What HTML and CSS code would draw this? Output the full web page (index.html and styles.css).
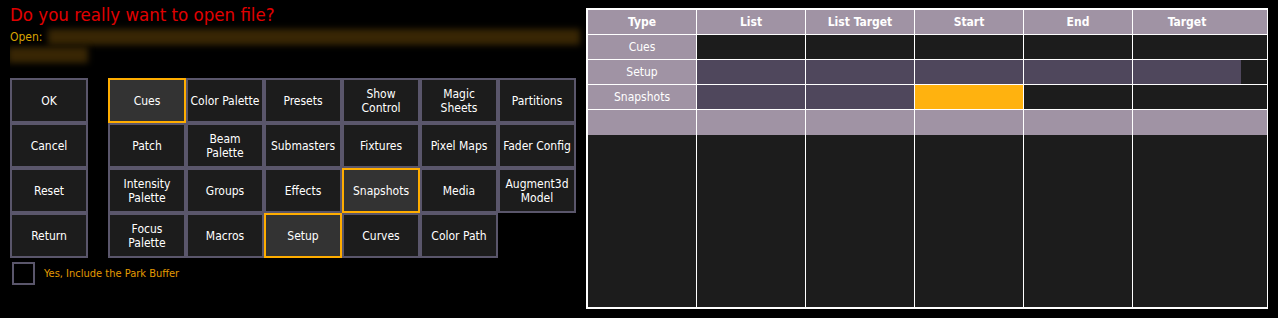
FILE: index.html
```html
<!DOCTYPE html>
<html>
<head>
<meta charset="utf-8">
<link rel="stylesheet" href="styles.css">
</head>
<body>
<div class="page">
  <div class="left">
    <div class="head">
      <div class="title">Do you really want to open file?</div>
      <div class="open-row">
        <span class="open-label">Open:</span>
        <div class="blur blur-long"></div>
      </div>
      <div class="blur blur-short"></div>
    </div>
    <div class="buttons">
      <div class="col-actions">
        <div class="btn">OK</div>
        <div class="btn">Cancel</div>
        <div class="btn">Reset</div>
        <div class="btn">Return</div>
      </div>
      <div class="grid-types">
        <div class="btn sel">Cues</div>
        <div class="btn">Color Palette</div>
        <div class="btn">Presets</div>
        <div class="btn">Show<br>Control</div>
        <div class="btn">Magic<br>Sheets</div>
        <div class="btn">Partitions</div>
        <div class="btn">Patch</div>
        <div class="btn">Beam<br>Palette</div>
        <div class="btn">Submasters</div>
        <div class="btn">Fixtures</div>
        <div class="btn">Pixel Maps</div>
        <div class="btn">Fader Config</div>
        <div class="btn">Intensity<br>Palette</div>
        <div class="btn">Groups</div>
        <div class="btn">Effects</div>
        <div class="btn sel">Snapshots</div>
        <div class="btn">Media</div>
        <div class="btn">Augment3d<br>Model</div>
        <div class="btn">Focus<br>Palette</div>
        <div class="btn">Macros</div>
        <div class="btn sel">Setup</div>
        <div class="btn">Curves</div>
        <div class="btn">Color Path</div>
      </div>
    </div>
    <div class="check-row">
      <div class="checkbox"></div>
      <span class="check-label">Yes, Include the Park Buffer</span>
    </div>
  </div>
  <div class="table">
    <div class="th">Type</div>
    <div class="th">List</div>
    <div class="th">List Target</div>
    <div class="th">Start</div>
    <div class="th">End</div>
    <div class="th th-last">Target</div>

    <div class="td type">Cues</div>
    <div class="td"></div>
    <div class="td"></div>
    <div class="td"></div>
    <div class="td"></div>
    <div class="td"></div>

    <div class="td type">Setup</div>
    <div class="td fill"></div>
    <div class="td fill"></div>
    <div class="td fill"></div>
    <div class="td fill"></div>
    <div class="td fill-part"></div>

    <div class="td type">Snapshots</div>
    <div class="td fill"></div>
    <div class="td fill"></div>
    <div class="td on"></div>
    <div class="td"></div>
    <div class="td"></div>

    <div class="td blank"></div>
    <div class="td blank"></div>
    <div class="td blank"></div>
    <div class="td blank"></div>
    <div class="td blank"></div>
    <div class="td blank"></div>

    <div class="rest"></div>
    <div class="rest"></div>
    <div class="rest"></div>
    <div class="rest"></div>
    <div class="rest"></div>
    <div class="rest"></div>
  </div>
</div>
</body>
</html>
```

FILE: styles.css
```css
html, body {
  margin: 0;
  padding: 0;
  background: #000;
}
body {
  width: 1278px;
  height: 318px;
  overflow: hidden;
  font-family: "DejaVu Sans Condensed", "DejaVu Sans", sans-serif;
  font-stretch: condensed;
  color: #fff;
}
.page {
  display: flex;
  align-items: flex-start;
}
.left {
  width: 576px;
  padding-left: 10px;
}
.head {
  height: 78px;
  overflow: hidden;
}
.title {
  padding-top: 4px;
  font-size: 18.5px;
  line-height: 22px;
  color: #e00000;
}
.open-row {
  display: flex;
  align-items: center;
  margin-top: 2px;
  height: 18px;
}
.open-label {
  font-size: 12px;
  line-height: 16px;
  color: #d8a300;
}
.blur {
  background: rgba(62, 42, 4, 0.9);
  filter: blur(3px);
  height: 16px;
}
.blur-long {
  flex: 1;
  margin-left: 6px;
  margin-right: 6px;
}
.blur-short {
  width: 80px;
  margin-top: 1px;
  margin-left: -2px;
}
.buttons {
  display: flex;
  gap: 20px;
}
.col-actions {
  display: grid;
  grid-template-columns: 78px;
  grid-template-rows: repeat(4, 45px);
}
.grid-types {
  display: grid;
  grid-template-columns: repeat(6, 78px);
  grid-template-rows: repeat(4, 45px);
}
.btn {
  box-sizing: border-box;
  border: 2px solid #5a566b;
  background: #1c1c1c;
  display: flex;
  align-items: center;
  justify-content: center;
  text-align: center;
  font-size: 12px;
  line-height: 14px;
  color: #fff;
  white-space: nowrap;
}
.btn.sel {
  border-color: #ffad00;
  background: #333333;
}
.check-row {
  display: flex;
  align-items: center;
  margin-top: 4px;
  margin-left: 2px;
}
.checkbox {
  box-sizing: border-box;
  width: 23px;
  height: 23px;
  border: 2px solid #5a566b;
}
.check-label {
  margin-left: 9px;
  font-size: 11px;
  color: #e39a00;
}
.table {
  margin-top: 8px;
  box-sizing: border-box;
  width: 682px;
  height: 301px;
  border: 2px solid #fff;
  background: #fff;
  display: grid;
  grid-template-columns: repeat(5, 108px) 134px;
  grid-template-rows: repeat(4, 25px) 25px 1fr;
  column-gap: 1px;
}
.th, .td {
  box-sizing: border-box;
  border-bottom: 1px solid #fff;
  display: flex;
  align-items: center;
  justify-content: center;
  font-size: 12px;
  color: #fff;
}
.th {
  background: #a093a4;
  font-weight: bold;
}
.th-last {
  padding-right: 26px;
}
.td {
  background: #1c1c1c;
}
.td.type {
  background: #a093a4;
}
.td.fill {
  background: #4f475c;
}
.td.fill-part {
  background: linear-gradient(to right, #4f475c 108px, #1c1c1c 108px);
}
.td.on {
  background: #ffb20f;
}
.td.blank {
  background: #a093a4;
  border-bottom: none;
}
.rest {
  background: #1c1c1c;
}
```
